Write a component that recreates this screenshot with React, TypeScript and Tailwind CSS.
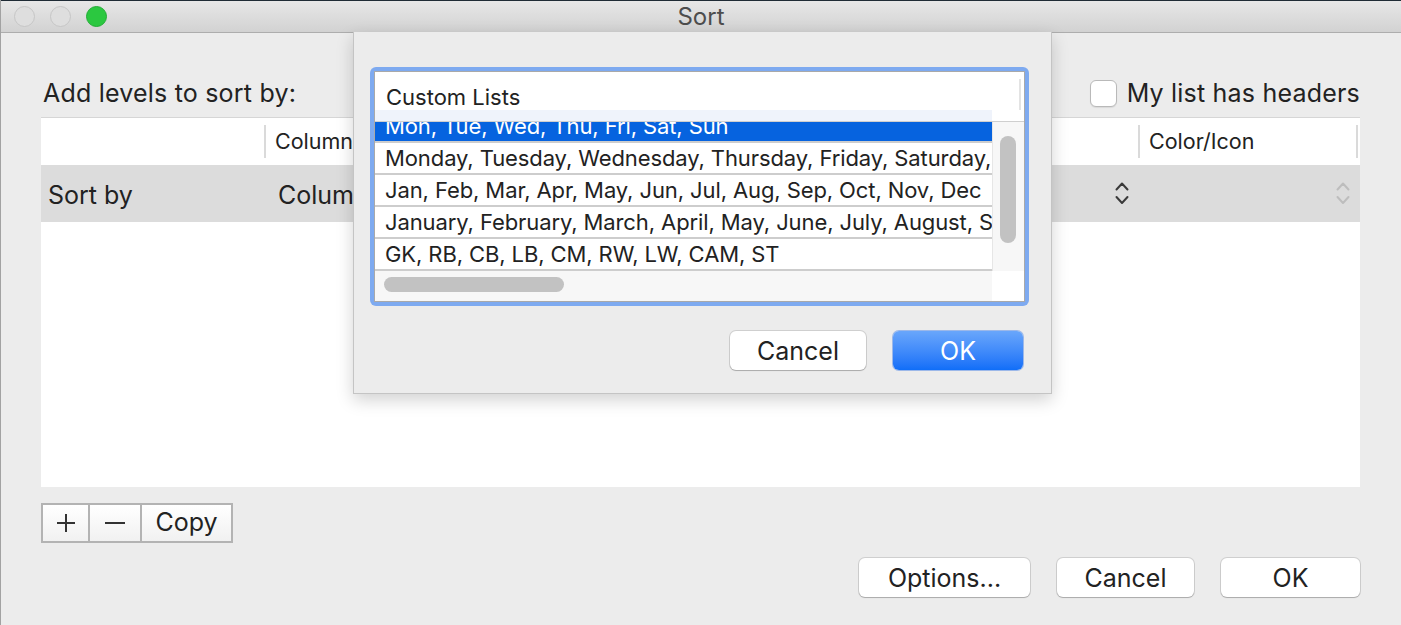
import React from 'react';

const font = { fontFamily: 'Inter, "Liberation Sans", sans-serif' };

const lists = [
  'Mon, Tue, Wed, Thu, Fri, Sat, Sun',
  'Monday, Tuesday, Wednesday, Thursday, Friday, Saturday, Sunday',
  'Jan, Feb, Mar, Apr, May, Jun, Jul, Aug, Sep, Oct, Nov, Dec',
  'January, February, March, April, May, June, July, August, September, October, November, December',
  'GK, RB, CB, LB, CM, RW, LW, CAM, ST',
];

function Chevrons({ light }: { light?: boolean }) {
  return (
    <svg width="14" height="23" viewBox="0 0 14 23" fill="none" className={light ? 'text-[#bdbdbd]' : 'text-[#3a3a3a]'}>
      <path d="M1.5 7.5 L7 1.5 L12.5 7.5" stroke="currentColor" strokeWidth="2" strokeLinecap="round" strokeLinejoin="round" />
      <path d="M1.5 15 L7 21 L12.5 15" stroke="currentColor" strokeWidth="2" strokeLinecap="round" strokeLinejoin="round" />
    </svg>
  );
}

function MacButton({ children, className = '' }: { children: React.ReactNode; className?: string }) {
  return (
    <button
      className={`h-[39px] pt-[2px] rounded-[6px] bg-white text-[25px] leading-none text-[#222] shadow-[0_0_0_1px_rgba(0,0,0,0.12),0_1px_1px_rgba(0,0,0,0.18)] ${className}`}
    >
      {children}
    </button>
  );
}

function CustomListsSheet() {
  return (
    <div className="absolute left-[352px] top-[32px] w-[699px] h-[362px] bg-[#ececec] border-x border-b border-[#c4c4c4] shadow-[0_6px_16px_rgba(0,0,0,0.18)] pt-[35px] pl-[16px]">
      <div className="w-[659px] h-[239px] rounded-[6px] bg-[#7eaaf0] p-[4px]">
        <div className="h-full border border-[#a9a9a9] bg-white flex flex-col overflow-hidden">
          {/* header */}
          <div className="flex h-[49px]">
            <div className="w-[617px] flex flex-col">
              <div className="h-[38px] flex items-center pt-[12px] pl-[11px] text-[22px] text-[#222]">Custom Lists</div>
              <div className="h-[11px] bg-[#eff3fb]" />
            </div>
            <div className="flex-1 flex">
              <div className="w-[27px]" />
              <div className="mt-[7px] h-[31px] w-[2px] bg-[#e3e3e3]" />
            </div>
          </div>
          <div className="h-[1px] bg-[#cfcfcf]" />
          {/* body */}
          <div className="flex h-[149px]">
            <div className="w-[617px] overflow-hidden">
              <div className="-mt-[11px]">
                {lists.map((l, i) => (
                  <div
                    key={l}
                    className={`h-[32px] border-b-2 border-[#cdcdcd] pl-[10px] flex items-center whitespace-nowrap overflow-hidden text-[22px] tracking-[-0.1px] ${
                      i === 0 ? 'bg-[#0663df] text-white' : 'text-[#222]'
                    }`}
                  >
                    {l}
                  </div>
                ))}
              </div>
            </div>
            <div className="flex-1 bg-[#f7f7f7] border-l border-[#e6e6e6] pl-[7px] pt-[14px]">
              <div className="w-[16px] h-[107px] rounded-full bg-[#c2c2c2]" />
            </div>
          </div>
          {/* horizontal scroller */}
          <div className="flex flex-1">
            <div className="w-[617px] bg-[#f7f7f7] pt-[6px] pl-[9px]">
              <div className="w-[180px] h-[15px] rounded-full bg-[#c2c2c2]" />
            </div>
            <div className="flex-1 bg-white" />
          </div>
        </div>
      </div>
      <div className="flex justify-end gap-[27px] mt-[25px] pr-[28px]">
        <MacButton className="w-[136px]">Cancel</MacButton>
        <button className="w-[130px] h-[39px] pt-[2px] rounded-[6px] text-[25px] leading-none text-white bg-gradient-to-b from-[#69a6fb] to-[#0f6ef8] shadow-[0_0_0_1px_rgba(10,90,230,0.35)]">
          OK
        </button>
      </div>
    </div>
  );
}

export default function App() {
  return (
    <div style={font} className="relative w-[1401px] h-[625px] overflow-hidden bg-[#ececec] border-l border-[#a2a2a2]">
      {/* title bar */}
      <div className="h-[1px] bg-[#1f2b35]" />
      <div className="relative h-[32px] bg-gradient-to-b from-[#e7e7e7] to-[#d2d2d2] border-b border-[#adadad] flex items-center">
        <div className="flex gap-[15px] pl-[13px]">
          <div className="w-[21px] h-[21px] rounded-full bg-[#dedede] border border-[#c6c6c6]" />
          <div className="w-[21px] h-[21px] rounded-full bg-[#dedede] border border-[#c6c6c6]" />
          <div className="w-[21px] h-[21px] rounded-full bg-[#2bc840] border border-[#22ad35]" />
        </div>
        <div className="absolute inset-0 flex items-center justify-center text-[24px] text-[#4d4d4d]">Sort</div>
      </div>

      {/* content */}
      <div className="pl-[40px] pr-[41px] pt-[47px]">
        <div className="flex items-center justify-between h-[27px] text-[25px] text-[#222]">
          <div className="pl-[2px] tracking-[0.2px]">Add levels to sort by:</div>
          <label className="flex items-center gap-[10px] tracking-[0.2px]">
            <span className="w-[27px] h-[27px] rounded-[6px] bg-white border border-[#b9b9b9] shadow-[0_1px_1px_rgba(0,0,0,0.08)]" />
            My list has headers
          </label>
        </div>

        {/* sort levels table */}
        <div className="mt-[10px] w-[1319px] bg-white border-t border-[#d6d6d6]">
          <div className="flex h-[47px] items-center text-[21.5px] text-[#222]">
            <div className="w-[223px]" />
            <div className="w-[300px] h-[33px] border-l-2 border-[#dadada] pl-[9px] flex items-center">Column</div>
            <div className="w-[286px] h-[33px] border-l-2 border-[#dadada]" />
            <div className="w-[288px] h-[33px] border-l-2 border-[#dadada]" />
            <div className="w-[220px] h-[33px] border-x-2 border-[#dadada] pl-[9px] flex items-center">Color/Icon</div>
          </div>
          <div className="flex h-[57px] items-center bg-[#dcdcdc] text-[25px] text-[#222]">
            <div className="w-[223px] pl-[7px] pt-[5px]">Sort by</div>
            <div className="w-[300px] pl-[14px] pt-[5px]">Column</div>
            <div className="w-[286px]" />
            <div className="w-[288px] pr-[9px] flex items-center justify-end">
              <Chevrons />
            </div>
            <div className="w-[220px] pr-[8px] flex justify-end">
              <Chevrons light />
            </div>
          </div>
          <div className="h-[265px]" />
        </div>

        {/* add / remove / copy */}
        <div className="mt-[16px] flex w-[192px] h-[40px] border-2 border-[#b3b3b3] bg-gradient-to-b from-white to-[#f1f1f1] text-[25px] text-[#222]">
          <div className="w-[47px] flex items-center justify-center border-r-2 border-[#b3b3b3]">
            <svg width="20" height="20" viewBox="0 0 20 20" className="text-[#333]">
              <path d="M10 1 V19 M1 10 H19" stroke="currentColor" strokeWidth="2" />
            </svg>
          </div>
          <div className="w-[52px] flex items-center justify-center border-r-2 border-[#b3b3b3]">
            <span className="block w-[20px] h-[2px] bg-[#333]" />
          </div>
          <div className="flex-1 flex items-center justify-center">Copy</div>
        </div>

        {/* dialog buttons */}
        <div className="mt-[15px] flex justify-end gap-[27px]">
          <MacButton className="w-[171px]">Options...</MacButton>
          <MacButton className="w-[137px]">Cancel</MacButton>
          <MacButton className="w-[139px]">OK</MacButton>
        </div>
      </div>

      <CustomListsSheet />
    </div>
  );
}
